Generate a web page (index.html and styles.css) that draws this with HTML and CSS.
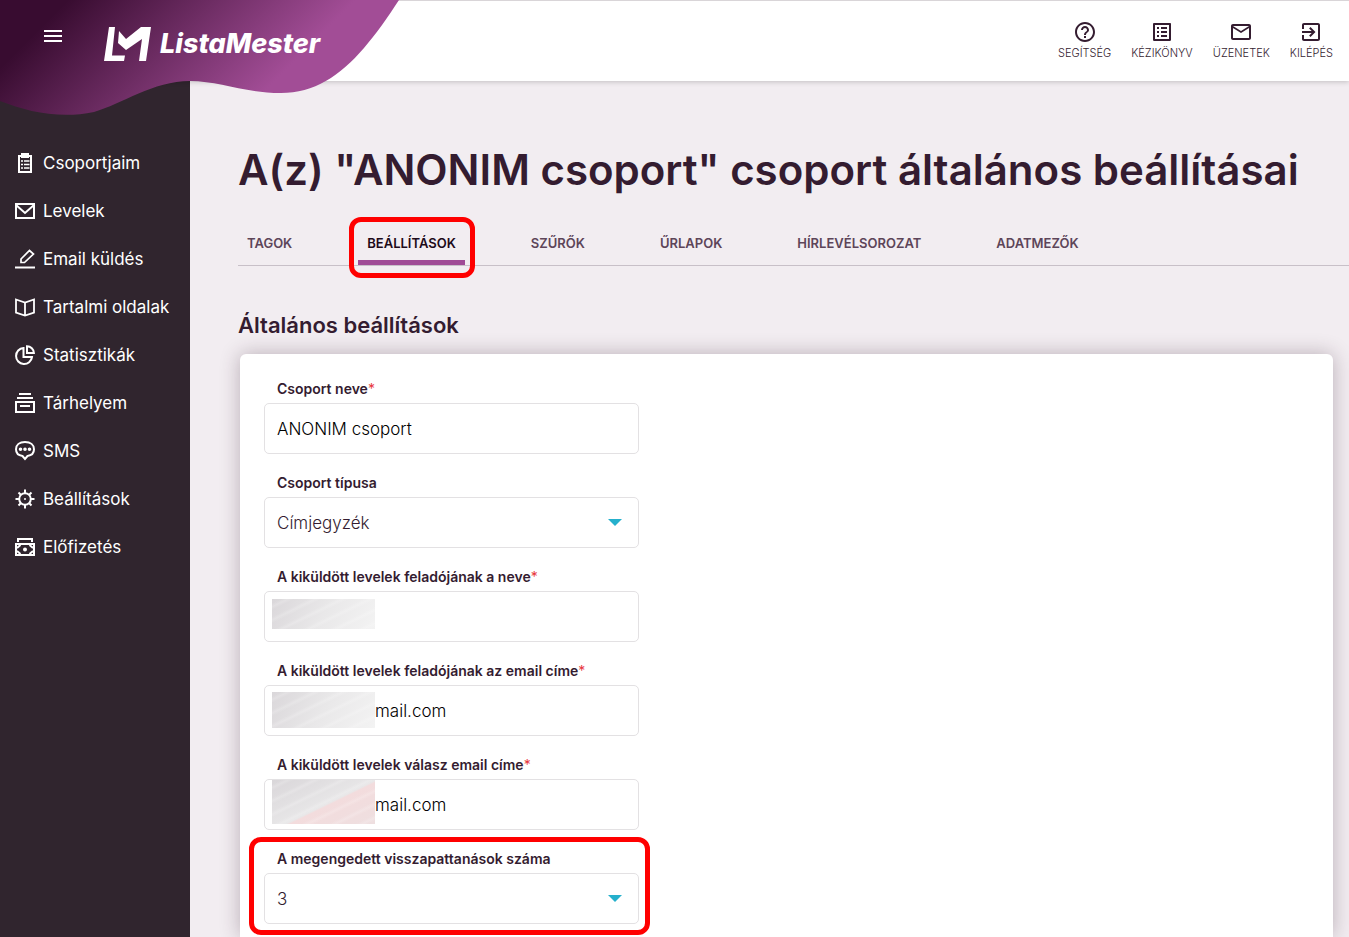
FILE: index.html
```html
<!DOCTYPE html>
<html lang="hu">
<head>
<meta charset="utf-8">
<meta name="viewport" content="width=device-width, initial-scale=1">
<title>ListaMester</title>
<link rel="stylesheet" href="styles.css">
</head>
<body>
<div class="page">
  <header class="topbar">
    <svg class="wave" viewBox="0 0 400 116" aria-hidden="true">
      <defs>
        <linearGradient id="brand" gradientUnits="userSpaceOnUse" x1="34" y1="34" x2="178" y2="178">
          <stop offset="0" stop-color="#380c30"/>
          <stop offset="1" stop-color="#a24d96"/>
        </linearGradient>
      </defs>
      <path fill="url(#brand)" d="M0 0H399C388 17 376 34 364 48C340 76 314 93 281 93C244 93 219 81 190 81C153 81 122 104 94 112C60 119 28 112 0 101Z"/>
    </svg>
    <div class="brand">
      <button class="menu-button" type="button" aria-label="Menü">
        <svg width="18" height="12" viewBox="0 0 18 12"><path fill="currentColor" d="M0 0h18v2H0zM0 5h18v2H0zM0 10h18v2H0z"/></svg>
      </button>
      <a class="logo" href="#">
        <svg width="47" height="34" viewBox="0 0 47 34" aria-hidden="true">
          <path fill="currentColor" d="M5 0H11L8 28.500H21L20 34H0ZM15 4L22 12L37 0H47L42 34H35L38 12L22 23L14 16Z"/>
        </svg>
        <span class="logo-text">ListaMester</span>
      </a>
    </div>
    <nav class="quick">
      <a href="#"><svg viewBox="0 0 24 24"><path d="M11 18h2v-2h-2v2zm1-16C6.48 2 2 6.48 2 12s4.48 10 10 10 10-4.48 10-10S17.52 2 12 2zm0 18c-4.41 0-8-3.59-8-8s3.59-8 8-8 8 3.59 8 8-3.59 8-8 8zm0-14c-2.21 0-4 1.79-4 4h2c0-1.1.9-2 2-2s2 .9 2 2c0 2-3 1.75-3 5h2c0-2.25 3-2.5 3-5 0-2.21-1.79-4-4-4z"/></svg>SEGÍTSÉG</a>
      <a href="#"><svg viewBox="0 0 24 24"><path d="M19 5v14H5V5h14m1.100-2H3.900c-.5 0-.9.4-.9.9v16.200c0 .4.4.9.9.9h16.200c.4 0 .9-.5.9-.9V3.900c0-.5-.5-.9-.9-.9zM11 7h6v2h-6V7zm0 4h6v2h-6v-2zm0 4h6v2h-6zM7 7h2v2H7zm0 4h2v2H7zm0 4h2v2H7z"/></svg>KÉZIKÖNYV</a>
      <a href="#"><svg viewBox="0 0 24 24"><path d="M20 4H4c-1.100 0-1.990.9-1.990 2L2 18c0 1.100.9 2 2 2h16c1.100 0 2-.9 2-2V6c0-1.100-.9-2-2-2zm0 14H4V8l8 5 8-5v10zm-8-7L4 6h16l-8 5z"/></svg>ÜZENETEK</a>
      <a href="#"><svg viewBox="0 0 24 24"><path d="M10.090 15.590L11.500 17l5-5-5-5-1.410 1.410L12.670 11H3v2h9.670l-2.580 2.590zM19 3H5c-1.110 0-2 .9-2 2v4h2V5h14v14H5v-4H3v4c0 1.100.89 2 2 2h14c1.100 0 2-.9 2-2V5c0-1.100-.9-2-2-2z"/></svg>KILÉPÉS</a>
    </nav>
  </header>

  <div class="body">
    <nav class="sidebar">
      <a href="#"><svg viewBox="0 0 20 20"><path d="M4 3h12v16H4z"/><path d="M7 1h6v3H7z"/><path stroke-width="1.500" d="M6 8h2M9 8h5.500M6 11.500h2M9 11.500h5.500M6 15h2M9 15h5.500"/></svg>Csoportjaim</a>
      <a href="#"><svg viewBox="0 0 20 20"><path d="M1 3h18v14H1zM1 4l9 8 9-8"/></svg>Levelek</a>
      <a href="#"><svg viewBox="0 0 20 20"><path stroke-width="1.700" d="M6 13.500V10L14.500 1.500 18.500 5 9.500 13.500z"/><path d="M0 18.500h20"/></svg>Email küldés</a>
      <a href="#"><svg viewBox="0 0 20 20"><path stroke-width="1.800" d="M1 2.500l9 3 9-3v13l-9 3-9-3zM10 5.500v13"/></svg>Tartalmi oldalak</a>
      <a href="#"><svg viewBox="0 0 20 20"><path d="M8.500 3A8 8 0 1 0 15 16L8.500 11z" stroke="none"/><path d="M8.500 3A8 8 0 1 0 17 12H8.500z"/><path d="M12 1.200V8h6.900A7 7 0 0 0 12 1.200z"/></svg>Statisztikák</a>
      <a href="#"><svg viewBox="0 0 20 20"><path d="M4 1h12M2 5h16M1 9h18v10H1zM5 13h10"/></svg>Tárhelyem</a>
      <a href="#"><svg viewBox="0 0 20 20"><path d="M7.500 15C3.500 14.500 1 12 1 8.300 1 4 4.500 1 10 1s9 3 9 7.300c0 3.700-2.500 6.200-6.500 6.700L10 18z"/><path stroke-width="3.600" stroke-linecap="round" d="M5.500 8.300h.01M10 8.300h.01M14.500 8.300h.01"/></svg>SMS</a>
      <a href="#"><svg viewBox="0 0 20 20"><circle cx="10" cy="10" r="5.800"/><path d="M10 .5v4M10 15.500v4M.5 10h4M15.500 10h4M3.500 3.500l2.300 2.300M14.200 14.200l2.300 2.300M3.500 16.500l2.300-2.300M14.200 5.800l2.300-2.300"/><path stroke-width="1.500" d="M9 10h2"/></svg>Beállítások</a>
      <a href="#"><svg viewBox="0 0 20 20"><path d="M3 5V2h14v3M1 7h18v11H1z"/><path d="M5.500 8L2 11M14.500 8l3.500 3M5.500 17L2 14M14.500 17l3.500-3"/><circle cx="10" cy="12.500" r="1"/></svg>Előfizetés</a>
    </nav>

    <main class="content">
      <h1>A(z) "ANONIM csoport" csoport általános beállításai</h1>
      <nav class="tabs">
        <a href="#">TAGOK</a>
        <a class="active" href="#" aria-current="page">BEÁLLÍTÁSOK</a>
        <a href="#">SZŰRŐK</a>
        <a href="#">ŰRLAPOK</a>
        <a href="#">HÍRLEVÉLSOROZAT</a>
        <a href="#">ADATMEZŐK</a>
      </nav>
      <h2>Általános beállítások</h2>
      <form class="panel">
        <div class="field">
          <label for="name">Csoport neve<span class="required">*</span></label>
          <div class="control"><input id="name" type="text" value="ANONIM csoport"></div>
        </div>
        <div class="field">
          <label for="type">Csoport típusa</label>
          <div class="control">
            <select id="type"><option>Címjegyzék</option></select>
            <svg class="arrow" viewBox="0 0 14 7"><path d="M0 0h14L7 7z"/></svg>
          </div>
        </div>
        <div class="field">
          <label for="sender">A kiküldött levelek feladójának a neve<span class="required">*</span></label>
          <div class="control"><input id="sender" type="text"><span class="mask mask-name"></span></div>
        </div>
        <div class="field">
          <label for="sender-mail">A kiküldött levelek feladójának az email címe<span class="required">*</span></label>
          <div class="control"><input class="masked" id="sender-mail" type="text" value="mail.com"><span class="mask mask-mail"></span></div>
        </div>
        <div class="field">
          <label for="reply-mail">A kiküldött levelek válasz email címe<span class="required">*</span></label>
          <div class="control"><input class="masked" id="reply-mail" type="text" value="mail.com"><span class="mask mask-reply"></span></div>
        </div>
        <div class="field marked">
          <label for="bounces">A megengedett visszapattanások száma</label>
          <div class="control">
            <select id="bounces"><option>3</option></select>
            <svg class="arrow" viewBox="0 0 14 7"><path d="M0 0h14L7 7z"/></svg>
          </div>
        </div>
      </form>
    </main>
  </div>
</div>
</body>
</html>
```

FILE: styles.css
```css
* {
  box-sizing: border-box;
}

body {
  margin: 0;
  background: #f2edf1;
  color: #341c30;
  font-family: Inter, "Noto Sans", sans-serif;
  font-size: 17px;
}

a {
  color: inherit;
  text-decoration: none;
}

.page {
  display: flex;
  flex-direction: column;
  min-height: 100vh;
}

.topbar {
  position: relative;
  z-index: 1;
  display: flex;
  justify-content: space-between;
  height: 81px;
  border-top: 1px solid #d9d5d8;
  background: #fff;
  box-shadow: 0 1px 5px rgba(0, 0, 0, 0.2);
}

.wave {
  position: absolute;
  top: -1px;
  left: 0;
  width: 400px;
  height: 116px;
}

.brand {
  position: relative;
  display: flex;
  align-items: flex-start;
  gap: 42px;
  padding: 26px 0 0 44px;
  color: #fff;
}

.menu-button {
  display: flex;
  padding: 3px 0;
  border: 0;
  background: none;
  color: inherit;
}

.logo {
  display: flex;
  align-items: center;
  gap: 9px;
}

.logo-text {
  font-size: 27px;
  font-style: italic;
  font-weight: 800;
  line-height: 34px;
}

.quick {
  display: flex;
  gap: 20px;
  padding: 19px 16px 0 0;
}

.quick a {
  display: flex;
  flex-direction: column;
  align-items: center;
  font-size: 11px;
  font-weight: 300;
  line-height: 18px;
}

.quick svg {
  width: 24px;
  height: 24px;
  fill: currentColor;
}

.body {
  display: flex;
  flex: 1;
}

.sidebar {
  flex: none;
  width: 190px;
  padding: 58px 0 0 15px;
  background: #30252e;
  color: #fff;
}

.sidebar a {
  display: flex;
  align-items: center;
  gap: 8px;
  height: 48px;
  white-space: nowrap;
}

.sidebar svg {
  width: 20px;
  height: 20px;
  fill: none;
  stroke: currentColor;
  stroke-width: 2;
}

.content {
  display: flex;
  flex: 1;
  flex-direction: column;
  min-width: 0;
  padding: 59px 0 0 48px;
}

h1 {
  margin: 0;
  font-size: 42px;
  font-weight: 600;
  line-height: 60px;
}

.tabs {
  display: flex;
  gap: 57px;
  margin-top: 20px;
  border-bottom: 1px solid #c8c0c8;
  color: #5d4559;
  font-size: 13px;
  font-weight: 600;
  line-height: 20px;
}

.tabs a {
  position: relative;
  padding: 13px 9px 7px;
  border-bottom: 5px solid transparent;
}

.tabs .active {
  border-color: #a04b96;
  color: #1d0a1a;
}

.tabs .active::after,
.marked::after {
  position: absolute;
  inset: -3px -10px -18px -9px;
  border: 5px solid #f00;
  border-radius: 12px;
  content: "";
  pointer-events: none;
}

h2 {
  margin: 44px 0 0;
  font-size: 22px;
  font-weight: 600;
  line-height: 30px;
}

.panel {
  display: flex;
  flex: 1;
  flex-direction: column;
  gap: 19px;
  margin: 14px 16px 0 2px;
  padding: 25px 24px 13px;
  border-radius: 6px 6px 0 0;
  background: #fff;
  box-shadow: 0 0 20px rgba(52, 28, 48, 0.3);
}

.field {
  position: relative;
  width: 100%;
  max-width: 375px;
}

.field label {
  display: block;
  padding-left: 13px;
  font-size: 14px;
  font-weight: 600;
  line-height: 20px;
  white-space: nowrap;
}

.required {
  color: #e8383d;
  font-weight: 400;
}

.control {
  position: relative;
  display: flex;
  margin-top: 4px;
}

.control input,
.control select {
  width: 100%;
  height: 51px;
  padding: 0 12px;
  border: 1px solid #e3e1e3;
  border-radius: 5px;
  appearance: none;
  background: #fff;
  color: #000;
  font: inherit;
  font-weight: 300;
}

.control select {
  color: #341c30;
}

.control .masked {
  padding-left: 110px;
}

.arrow {
  position: absolute;
  top: 22px;
  right: 17px;
  width: 14px;
  height: 7px;
  fill: #25b0cc;
  pointer-events: none;
}

.mask {
  position: absolute;
  left: 8px;
  width: 103px;
  background:
    repeating-linear-gradient(154deg, rgba(255, 255, 255, 0) 0 4px, rgba(255, 255, 255, 0.2) 7px, rgba(255, 255, 255, 0) 10px 12px),
    linear-gradient(120deg, #dad7da, #e9e8e9 50%, #f3f3f3);
}

.mask-name {
  top: 8px;
  height: 30px;
}

.mask-mail {
  top: 7px;
  height: 36px;
}

.mask-reply {
  top: 1px;
  height: 44px;
  background:
    repeating-linear-gradient(154deg, rgba(255, 255, 255, 0) 0 4px, rgba(255, 255, 255, 0.2) 7px, rgba(255, 255, 255, 0) 10px 12px),
    linear-gradient(154deg, #d9d6d9, #e8e7e8 54%, #f3dcdd 56%, #eedfe0);
}

.marked::after {
  inset: -12px -11px -11px -15px;
}
```
